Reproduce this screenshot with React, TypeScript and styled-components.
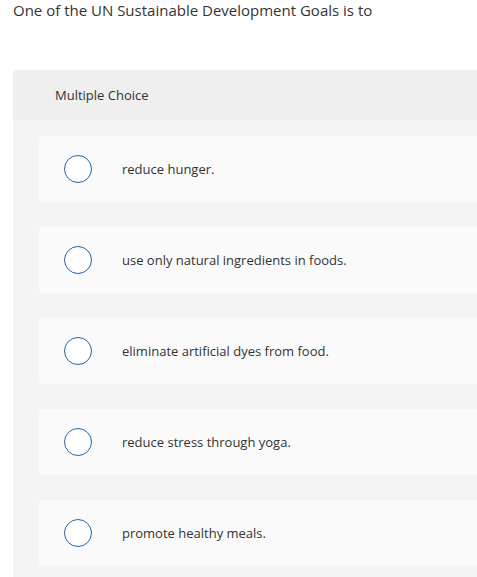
import React from 'react'
import styled, { createGlobalStyle } from 'styled-components'

const GlobalStyle = createGlobalStyle`
  html, body {
    margin: 0;
    padding: 0;
    background: #ffffff;
    font-family: "Open Sans", Arial, sans-serif;
    color: #333333;
  }
`

const Page = styled.div`
  width: 477px;
  height: 577px;
  overflow: hidden;
`

const Question = styled.p`
  margin: 0;
  padding: 0 0 0 13px;
  height: 70px;
  font-size: 15px;
  line-height: 20px;
  color: #333333;
`

const Panel = styled.section`
  margin-left: 13px;
  background: #f4f4f4;
  border-top-left-radius: 3px;
`

const PanelHeader = styled.div`
  height: 50px;
  display: flex;
  align-items: center;
  padding-left: 42px;
  background: #efefef;
  font-size: 13px;
  color: #333333;
  border-top-left-radius: 3px;
`

const OptionList = styled.div`
  display: flex;
  flex-direction: column;
  gap: 25px;
  padding: 16px 0 20px 26px;
`

const Option = styled.label`
  height: 66px;
  display: flex;
  align-items: center;
  background: #fafafa;
  border-radius: 3px 0 0 3px;
  padding-left: 25px;
  cursor: pointer;
`

const Radio = styled.span`
  width: 26px;
  height: 26px;
  border-radius: 50%;
  border: 1.4px solid #2563a6;
  background: #ffffff;
  flex-shrink: 0;
`

const OptionText = styled.span`
  margin-left: 30px;
  font-size: 13px;
  color: #333333;
`

const options = [
  'reduce hunger.',
  'use only natural ingredients in foods.',
  'eliminate artificial dyes from food.',
  'reduce stress through yoga.',
  'promote healthy meals.',
]

export default function App() {
  return (
    <Page>
      <GlobalStyle />
      <Question>One of the UN Sustainable Development Goals is to</Question>
      <Panel>
        <PanelHeader>Multiple Choice</PanelHeader>
        <OptionList>
          {options.map((text) => (
            <Option key={text}>
              <Radio />
              <OptionText>{text}</OptionText>
            </Option>
          ))}
        </OptionList>
      </Panel>
    </Page>
  )
}
